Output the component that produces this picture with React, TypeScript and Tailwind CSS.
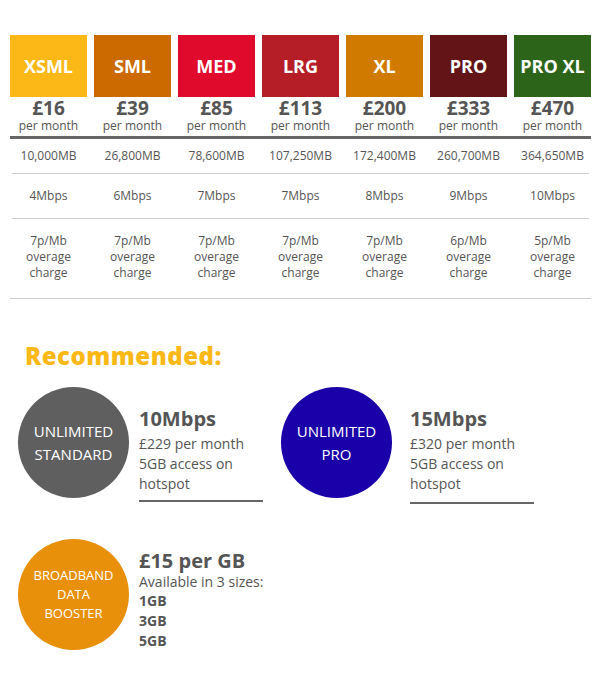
import React from "react";

type Plan = {
    name: string;
    color: string;
    price: string;
    data: string;
    speed: string;
    rate: string;
};

const plans: Plan[] = [
    {name: "XSML", color: "bg-[#fbb817]", price: "£16", data: "10,000MB", speed: "4Mbps", rate: "7p/Mb"},
    {name: "SML", color: "bg-[#cc6a00]", price: "£39", data: "26,800MB", speed: "6Mbps", rate: "7p/Mb"},
    {name: "MED", color: "bg-[#e00a2c]", price: "£85", data: "78,600MB", speed: "7Mbps", rate: "7p/Mb"},
    {name: "LRG", color: "bg-[#b51e27]", price: "£113", data: "107,250MB", speed: "7Mbps", rate: "7p/Mb"},
    {name: "XL", color: "bg-[#d07b00]", price: "£200", data: "172,400MB", speed: "8Mbps", rate: "7p/Mb"},
    {name: "PRO", color: "bg-[#621417]", price: "£333", data: "260,700MB", speed: "9Mbps", rate: "6p/Mb"},
    {name: "PRO XL", color: "bg-[#2c6519]", price: "£470", data: "364,650MB", speed: "10Mbps", rate: "5p/Mb"},
];

function Circle({color, lines, small}: { color: string; lines: string[]; small?: boolean }) {
    return (
        <div className={`w-[111px] h-[111px] shrink-0 rounded-full flex flex-col items-center justify-center text-white ${color} ${small ? "text-[13px] leading-[19px]" : "text-[15px] leading-[23px]"}`}>
            {lines.map((l) => <div key={l}>{l}</div>)}
        </div>
    );
}

function Info({title, lines, lineGap}: { title: string; lines: string[]; lineGap: string }) {
    return (
        <div className="mt-[20px]">
            <div className="font-bold text-[20px] leading-[24px]">{title}</div>
            <div className="mt-[3px]">
                {lines.map((l) => <div key={l} className="text-[14px] leading-[20px]">{l}</div>)}
            </div>
            <div className={`h-[2px] bg-[#666] w-[124px] ${lineGap}`}></div>
        </div>
    );
}

export default function App() {
    return (
        <div className="w-[600px] h-[675px] bg-white text-[#555] font-['Open_Sans',sans-serif]">
            <div className="pt-[35px] ml-[10px] w-[581px]">
                <div className="grid grid-cols-7 gap-x-[7px]">
                    {plans.map((p) => (
                        <div key={p.name} className="flex flex-col items-center">
                            <div className={`w-full h-[62px] flex items-center justify-center text-white font-bold text-[18px] ${p.color}`}>
                                {p.name}
                            </div>
                            <div className="font-bold text-[19px] leading-[22px]">{p.price}</div>
                            <div className="text-[12px] leading-[14px]">per month</div>
                        </div>
                    ))}
                </div>
                <div className="h-[3px] bg-[#666] mt-[3px]"></div>
                <div className="grid grid-cols-7 gap-x-[7px] text-[12px] text-center h-[34px] items-center">
                    {plans.map((p) => <div key={p.name}>{p.data}</div>)}
                </div>
                <div className="h-px bg-[#ccc] mx-[2px]"></div>
                <div className="grid grid-cols-7 gap-x-[7px] text-[12px] text-center h-[44px] items-center">
                    {plans.map((p) => <div key={p.name}>{p.speed}</div>)}
                </div>
                <div className="h-px bg-[#ccc] mx-[2px]"></div>
                <div className="grid grid-cols-7 gap-x-[7px] text-[12px] leading-[16px] text-center h-[79px] pt-[14px]">
                    {plans.map((p) => (
                        <div key={p.name}>
                            <div>{p.rate}</div>
                            <div>overage</div>
                            <div>charge</div>
                        </div>
                    ))}
                </div>
                <div className="h-px bg-[#ccc]"></div>
            </div>

            <div className="pl-[25px] mt-[42px] text-[24px] leading-[30px] font-extrabold tracking-[0.5px] text-[#fbb817]">Recommended:</div>

            <div className="flex mt-[16px] pl-[18px]">
                <div className="flex w-[263px] items-start gap-[10px]">
                    <Circle color="bg-[#5f5f5f]" lines={["UNLIMITED", "STANDARD"]}/>
                    <Info title="10Mbps" lines={["£229 per month", "5GB access on", "hotspot"]} lineGap="mt-[6px]"/>
                </div>
                <div className="flex items-start gap-[18px]">
                    <Circle color="bg-[#1a00a8]" lines={["UNLIMITED", "PRO"]}/>
                    <Info title="15Mbps" lines={["£320 per month", "5GB access on", "hotspot"]} lineGap="mt-[8px]"/>
                </div>
            </div>

            <div className="flex mt-[35px] pl-[18px] items-start gap-[10px]">
                <Circle color="bg-[#e8900a]" lines={["BROADBAND", "DATA", "BOOSTER"]} small/>
                <div className="mt-[10px]">
                    <div className="font-bold text-[20px] leading-[24px]">£15 per GB</div>
                    <div className="text-[14px] leading-[16px] mt-[1px]">Available in 3 sizes:</div>
                    <div className="font-bold text-[14px] leading-[20px] mt-[1px]">1GB</div>
                    <div className="font-bold text-[14px] leading-[20px]">3GB</div>
                    <div className="font-bold text-[14px] leading-[20px]">5GB</div>
                </div>
            </div>
        </div>
    );
}
